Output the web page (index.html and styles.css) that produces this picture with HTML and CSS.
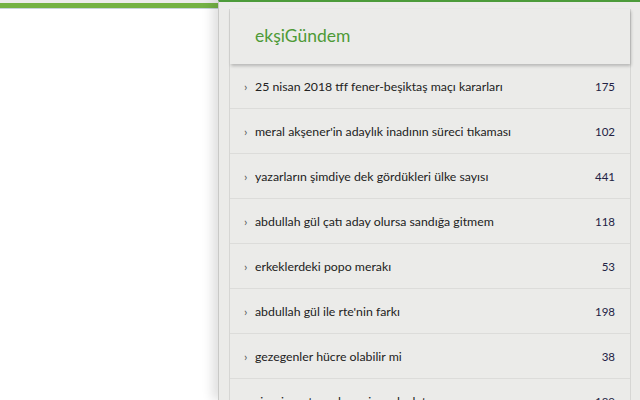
FILE: index.html
```html
<!DOCTYPE html>
<html lang="tr">
<head>
<meta charset="utf-8">
<title>ekşiGündem</title>
<link rel="stylesheet" href="styles.css">
</head>
<body>
<div class="screen">
  <div class="page">
    <div class="page-top"></div>
    <div class="page-bar"></div>
  </div>
  <div class="popup">
    <div class="column">
      <div class="header"><h1 class="title">ekşiGündem</h1></div>
      <ul class="list">
        <li class="row"><span class="chev">›</span><span class="topic">25 nisan 2018 tff fener-beşiktaş maçı kararları</span><span class="count">175</span></li>
        <li class="row"><span class="chev">›</span><span class="topic">meral akşener'in adaylık inadının süreci tıkaması</span><span class="count">102</span></li>
        <li class="row"><span class="chev">›</span><span class="topic">yazarların şimdiye dek gördükleri ülke sayısı</span><span class="count">441</span></li>
        <li class="row"><span class="chev">›</span><span class="topic">abdullah gül çatı aday olursa sandığa gitmem</span><span class="count">118</span></li>
        <li class="row"><span class="chev">›</span><span class="topic">erkeklerdeki popo merakı</span><span class="count">53</span></li>
        <li class="row"><span class="chev">›</span><span class="topic">abdullah gül ile rte'nin farkı</span><span class="count">198</span></li>
        <li class="row"><span class="chev">›</span><span class="topic">gezegenler hücre olabilir mi</span><span class="count">38</span></li>
        <li class="row"><span class="chev">›</span><span class="topic">siyasiın ortasında sevişen devlet</span><span class="count">189</span></li>
      </ul>
    </div>
  </div>
</div>
</body>
</html>
```

FILE: styles.css
```css
html, body {
  margin: 0;
  padding: 0;
  background: #ffffff;
}
body {
  font-family: "Lato", "Open Sans", "Liberation Sans", sans-serif;
}
.screen {
  width: 640px;
  height: 400px;
  overflow: hidden;
  display: flex;
}
.page {
  width: 218px;
  flex: none;
  background: #ffffff;
}
.page-top {
  height: 3px;
  background: #ececec;
}
.page-bar {
  height: 5px;
  background: #74b244;
  border-bottom: 1px solid #c9d3dc;
}
.popup {
  flex: 1;
  background: #ebebe9;
  border-top: 2px solid #4c9b3a;
  border-left: 1px solid #c9c9c7;
  box-shadow: -6px 0 10px rgba(0, 0, 0, 0.12);
  padding: 7px 9px 0 10px;
  position: relative;
}
.column {
  border-left: 1px solid #d6d6d4;
  border-right: 1px solid #d6d6d4;
  height: 100%;
}
.header {
  height: 52px;
  display: flex;
  align-items: center;
  padding-left: 25px;
  padding-bottom: 3px;
  background: #ebebe9;
  box-shadow: 1px 2px 3px rgba(0, 0, 0, 0.22);
  position: relative;
}
.title {
  margin: 0;
  font-size: 17.5px;
  font-weight: 400;
  color: #4e9a37;
}
.list {
  list-style: none;
  margin: 0;
  padding: 0;
}
.row {
  height: 44px;
  border-bottom: 1px solid #dcdcda;
  display: flex;
  align-items: center;
  padding: 0 15px 0 14px;
  font-size: 12.3px;
  color: #222222;
}
.chev {
  width: 11px;
  color: #555555;
  font-size: 12px;
}
.topic {
  flex: 1;
}
.count {
  color: #222244;
  font-size: 11.5px;
}
```
